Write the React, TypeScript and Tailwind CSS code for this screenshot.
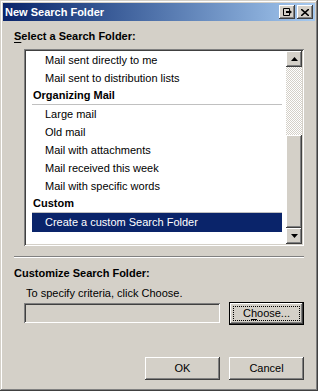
import React from 'react';

const font = "font-['Tahoma','Liberation_Sans',sans-serif]";

const items: { label: string; kind: 'item' | 'header' | 'selected' }[] = [
  { label: 'Mail sent directly to me', kind: 'item' },
  { label: 'Mail sent to distribution lists', kind: 'item' },
  { label: 'Organizing Mail', kind: 'header' },
  { label: 'Large mail', kind: 'item' },
  { label: 'Old mail', kind: 'item' },
  { label: 'Mail with attachments', kind: 'item' },
  { label: 'Mail received this week', kind: 'item' },
  { label: 'Mail with specific words', kind: 'item' },
  { label: 'Custom', kind: 'header' },
  { label: 'Create a custom Search Folder', kind: 'selected' },
];

const raised =
  'bg-[#d4d0c8] shadow-[inset_-1px_-1px_#404040,inset_1px_1px_#ffffff,inset_-2px_-2px_#808080,inset_2px_2px_#d4d0c8]';
const sunken =
  'shadow-[inset_1px_1px_#808080,inset_-1px_-1px_#ffffff,inset_2px_2px_#404040,inset_-2px_-2px_#d4d0c8]';

function Arrow({ up }: { up?: boolean }) {
  return (
    <svg width="7" height="4" viewBox="0 0 7 4">
      <path d={up ? 'M3.5 0 L7 4 L0 4 Z' : 'M0 0 L7 0 L3.5 4 Z'} fill="#000" />
    </svg>
  );
}

function Button({ children, focused }: { children: React.ReactNode; focused?: boolean }) {
  if (focused) {
    return (
      <div className="w-[75px] h-[23px] border border-black">
        <div className={`w-full h-full ${raised} flex items-center justify-center p-[3px]`}>
          <div className="w-full h-full border border-dotted border-black flex items-center justify-center text-[11px] text-black">
            {children}
          </div>
        </div>
      </div>
    );
  }
  return (
    <div className={`w-[75px] h-[23px] ${raised} flex items-center justify-center text-[11px] text-black`}>
      {children}
    </div>
  );
}

export default function App() {
  return (
    <div
      className={`${font} w-[318px] h-[391px] bg-[#d4d0c8] p-[3px] flex flex-col shadow-[inset_-1px_-1px_#404040,inset_1px_1px_#d4d0c8,inset_-2px_-2px_#808080,inset_2px_2px_#ffffff]`}
    >
      {/* title bar */}
      <div className="h-[18px] bg-gradient-to-r from-[#0a246a] to-[#a6caf0] flex items-center pl-[2px] pr-[2px]">
        <span className="text-[11px] font-bold text-white leading-none flex-1">New Search Folder</span>
        <div className={`w-[16px] h-[14px] ${raised} flex items-center justify-center`}>
          <svg width="9" height="8" viewBox="0 0 9 8">
            <path d="M0.5 0.5 H6.5 V2 M0.5 0.5 V7.5 H6.5 V6" stroke="#000" fill="none" />
            <path d="M3 4 H7" stroke="#000" strokeWidth="2" />
            <path d="M6 1.5 L9 4 L6 6.5 Z" fill="#000" />
          </svg>
        </div>
        <div className={`ml-[2px] w-[16px] h-[14px] ${raised} flex items-center justify-center`}>
          <svg width="8" height="7" viewBox="0 0 8 7">
            <path d="M0 0 L8 7 M8 0 L0 7" stroke="#000" strokeWidth="1.6" />
          </svg>
        </div>
      </div>

      <div className="ml-[11px] mt-[8px] h-[14px] leading-[14px] text-[11px] font-bold text-black">
        <span className="underline underline-offset-2">S</span>elect a Search Folder:
      </div>

      {/* list box */}
      <div className={`ml-[21px] mt-[6px] w-[280px] h-[197px] bg-white ${sunken} p-[2px] flex`}>
        <div className="flex-1 flex flex-col pl-[6px] pr-[4px] pt-0">
          {items.map((it) =>
            it.kind === 'header' ? (
              <div key={it.label} className="h-[18px] flex flex-col">
                <div className="flex-1 flex items-center pl-[1px] text-[11px] font-bold text-black">{it.label}</div>
                <div className="h-[2px] bg-[#c0c0c0]" />
              </div>
            ) : it.kind === 'selected' ? (
              <div
                key={it.label}
                className="h-[19px] flex items-center pl-[13px] bg-[#0a246a] text-white text-[11px]"
              >
                {it.label}
              </div>
            ) : (
              <div key={it.label} className="h-[18px] flex items-center pl-[13px] text-[11px] text-black">
                {it.label}
              </div>
            ),
          )}
        </div>
        <div className="w-[16px] flex flex-col bg-[repeating-conic-gradient(#d4d0c8_0%_25%,#ffffff_0%_50%)] bg-size-[2px_2px]">
          <div className={`h-[16px] ${raised} flex items-center justify-center`}>
            <Arrow up />
          </div>
          <div className="h-[68px]" />
          <div className={`flex-1 ${raised}`} />
          <div className={`h-[16px] ${raised} flex items-center justify-center`}>
            <Arrow />
          </div>
        </div>
      </div>

      {/* separator */}
      <div className="ml-[11px] mt-[10px] w-[290px] border-t border-t-[#808080] border-b border-b-white" />

      <div className="ml-[11px] mt-[8px] h-[14px] leading-[14px] text-[11px] font-bold text-black">
        Customize Search Folder:
      </div>
      <div className="ml-[23px] mt-[6px] h-[14px] leading-[14px] text-[11px] text-black">
        To specify criteria, click Choose.
      </div>

      <div className="ml-[21px] mt-[2px] flex items-start gap-[9px]">
        <div className={`mt-[1px] w-[196px] h-[20px] bg-[#d4d0c8] ${sunken}`} />
        <Button focused>
          C<span className="underline underline-offset-2">h</span>oose...
        </Button>
      </div>

      <div className="mt-auto mb-[8px] pr-[11px] flex justify-end gap-[9px]">
        <Button>OK</Button>
        <Button>Cancel</Button>
      </div>
    </div>
  );
}
